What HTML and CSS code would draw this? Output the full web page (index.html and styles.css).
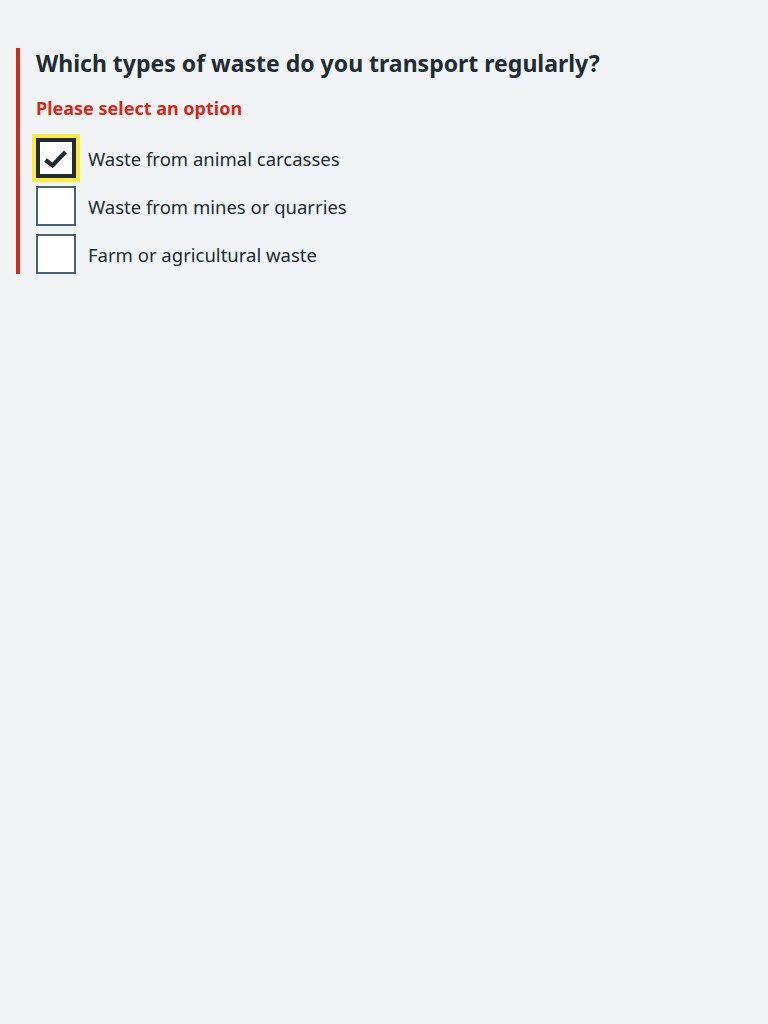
FILE: index.html
```html
<!DOCTYPE html>
<html lang="en">
<head>
<meta charset="utf-8">
<title>Waste types</title>
<link rel="stylesheet" href="styles.css">
</head>
<body>
<main class="page">
  <div class="form-group form-group--error" role="group" aria-labelledby="q-title">
    <h1 class="question" id="q-title">Which types of waste do you transport regularly?</h1>
    <p class="error-message">Please select an option</p>
    <div class="checkboxes">
      <label class="checkbox">
        <span class="checkbox__box checkbox__box--checked checkbox__box--focus">
          <svg class="checkbox__tick" width="26" height="20" viewBox="0 0 26 20" aria-hidden="true">
            <path d="M2.5 11 L9.5 16.5 L22.5 3" fill="none" stroke="#212b32" stroke-width="4.2" stroke-linecap="butt" stroke-linejoin="miter"/>
          </svg>
        </span>
        <span class="checkbox__label">Waste from animal carcasses</span>
      </label>
      <label class="checkbox">
        <span class="checkbox__box"></span>
        <span class="checkbox__label">Waste from mines or quarries</span>
      </label>
      <label class="checkbox">
        <span class="checkbox__box"></span>
        <span class="checkbox__label">Farm or agricultural waste</span>
      </label>
    </div>
  </div>
</main>
</body>
</html>
```

FILE: styles.css
```css
html, body {
  margin: 0;
  padding: 0;
  background: #f0f4f5;
}

body {
  font-family: "Noto Sans", "Open Sans", sans-serif;
  color: #212b32;
}

.page {
  padding: 48px 16px;
}

.form-group--error {
  border-left: 4px solid #d5281b;
  padding-left: 16px;
}

.question {
  margin: 0;
  font-size: 23px;
  line-height: 31px;
  font-weight: 700;
}

.error-message {
  margin: 17px 0 0;
  color: #d5281b;
  font-weight: 700;
  font-size: 18px;
  line-height: 24px;
}

.checkboxes {
  margin-top: 18px;
  display: flex;
  flex-direction: column;
  gap: 8px;
}

.checkbox {
  display: flex;
  align-items: center;
  gap: 12px;
  height: 40px;
  cursor: pointer;
}

.checkbox__box {
  box-sizing: border-box;
  width: 40px;
  height: 40px;
  flex: none;
  background: #ffffff;
  border: 2px solid #4c6272;
  display: flex;
  align-items: center;
  justify-content: center;
}

.checkbox__box--checked {
  border: 4px solid #212b32;
}

.checkbox__box--focus {
  box-shadow: 0 0 0 4px #ffeb3b;
}

.checkbox__tick {
  display: block;
  margin-top: 1px;
}

.checkbox__label {
  font-size: 18.5px;
  line-height: 24px;
  padding-top: 2px;
}
```
